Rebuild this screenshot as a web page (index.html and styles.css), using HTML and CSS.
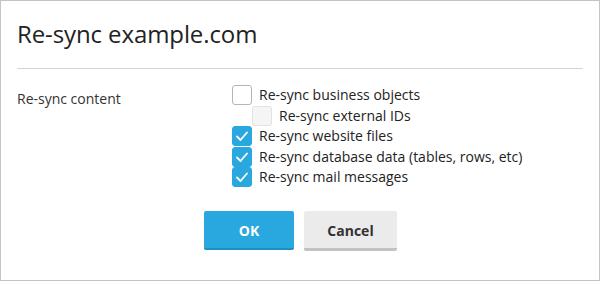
FILE: index.html
```html
<!DOCTYPE html>
<html>
<head>
<meta charset="utf-8">
<link rel="stylesheet" href="styles.css">
</head>
<body>
<div class="dialog">
  <div class="header">
    <h1 class="title">Re-sync example.com</h1>
  </div>
  <div class="form-row">
    <div class="label">Re-sync content</div>
    <div class="options">
      <div class="opt">
        <span class="box"></span><span class="text">Re-sync business objects</span>
      </div>
      <div class="opt sub">
        <span class="box disabled"></span><span class="text">Re-sync external IDs</span>
      </div>
      <div class="opt">
        <span class="box checked"><svg viewBox="0 0 20 20" width="20" height="20"><polyline points="5,10.5 8.5,14 15,6.5" fill="none" stroke="#fff" stroke-width="1.8" stroke-linecap="round" stroke-linejoin="round"/></svg></span><span class="text">Re-sync website files</span>
      </div>
      <div class="opt">
        <span class="box checked"><svg viewBox="0 0 20 20" width="20" height="20"><polyline points="5,10.5 8.5,14 15,6.5" fill="none" stroke="#fff" stroke-width="1.8" stroke-linecap="round" stroke-linejoin="round"/></svg></span><span class="text">Re-sync database data (tables, rows, etc)</span>
      </div>
      <div class="opt">
        <span class="box checked"><svg viewBox="0 0 20 20" width="20" height="20"><polyline points="5,10.5 8.5,14 15,6.5" fill="none" stroke="#fff" stroke-width="1.8" stroke-linecap="round" stroke-linejoin="round"/></svg></span><span class="text">Re-sync mail messages</span>
      </div>
    </div>
  </div>
  <div class="buttons">
    <button class="btn btn-primary">OK</button>
    <button class="btn btn-default">Cancel</button>
  </div>
</div>
</body>
</html>
```

FILE: styles.css
```css
html, body {
  margin: 0;
  padding: 0;
  background: #fff;
}
body {
  font-family: "Open Sans", "Noto Sans", sans-serif;
  color: #222;
}
.dialog {
  width: 600px;
  height: 281px;
  box-sizing: border-box;
  border: 1px solid #c4c4c4;
  padding: 0 16px;
}
.header {
  padding: 17px 0 18px;
  border-bottom: 1px solid #d3d3db;
}
.title {
  margin: 0;
  font-size: 24px;
  letter-spacing: -0.1px;
  line-height: 32px;
  font-weight: 400;
  color: #222;
}
.form-row {
  display: flex;
  padding-top: 16px;
}
.label {
  width: 215px;
  flex: none;
  font-size: 14px;
  line-height: 20px;
  margin-top: 4px;
  color: #333;
}
.options {
  display: flex;
  flex-direction: column;
  gap: 0.5px;
}
.opt {
  display: flex;
  align-items: center;
  height: 20px;
  font-size: 14px;
  line-height: 20px;
  color: #222;
}
.opt.sub {
  padding-left: 20px;
}
.box {
  width: 20px;
  height: 20px;
  box-sizing: border-box;
  border: 1px solid #b5b5b5;
  border-radius: 3px;
  background: #fff;
  margin-right: 7px;
  flex: none;
  position: relative;
}
.box.disabled {
  background: #f5f5f5;
  border-color: #e2e2e2;
}
.box.checked {
  background: #29a8df;
  border-color: #29a8df;
}
.box svg {
  position: absolute;
  left: -1px;
  top: -1px;
}
.buttons {
  display: flex;
  justify-content: center;
  gap: 10px;
  margin-top: 24px;
  padding-left: 1px;
}
.btn {
  font-family: "Open Sans", "Noto Sans", sans-serif;
  font-size: 14px;
  font-weight: 700;
  height: 40px;
  box-sizing: border-box;
  border: 0;
  border-radius: 2px;
  padding: 2px 0 0;
  cursor: pointer;
}
.btn-primary {
  width: 90px;
  height: 39px;
  background: #29a8df;
  color: #fff;
  border-bottom: 2px solid #1f8fc0;
}
.btn-default {
  width: 93px;
  background: #ebebeb;
  color: #333;
  border-bottom: 3px solid #c2c2c2;
}
```
